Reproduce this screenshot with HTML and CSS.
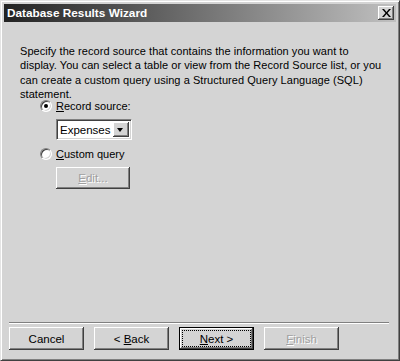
FILE: index.html
```html
<!DOCTYPE html>
<html lang="en">
<head>
  <meta charset="UTF-8" />
  <meta name="viewport" content="width=device-width, initial-scale=1.0" />
  <title>Database Results Wizard</title>
  <link rel="stylesheet" href="styles.css">
</head>
<body>
  <div class="window">
    <div class="titlebar">
      <span class="title">Database Results Wizard</span>
      <button class="close-btn" aria-label="Close">
        <svg width="9" height="8" viewBox="0 0 9 8">
          <path d="M0 0h2l2.5 3 2.5-3h2L5.5 4 9 8H7L4.5 5 2 8H0l3.5-4z" fill="#000"/>
        </svg>
      </button>
    </div>

    <div class="content">
      <p class="intro">Specify the record source that contains the information you want to display. You can select a table or view from the Record Source list, or you can create a custom query using a Structured Query Language (SQL) statement.</p>

      <div class="options">
        <label class="radio-row">
          <span class="radio checked"></span>
          <span><u>R</u>ecord source:</span>
        </label>
        <div class="select">
          <span class="select-value">Expenses</span>
          <span class="select-arrow"></span>
        </div>
        <label class="radio-row">
          <span class="radio"></span>
          <span><u>C</u>ustom query</span>
        </label>
        <button class="btn disabled edit-btn"><u>E</u>dit...</button>
      </div>
    </div>

    <div class="footer">
      <div class="separator"></div>
      <div class="buttons">
        <button class="btn">Cancel</button>
        <button class="btn">&lt; <u>B</u>ack</button>
        <button class="btn default"><span class="focus"><u>N</u>ext &gt;</span></button>
        <button class="btn disabled"><u>F</u>inish</button>
      </div>
    </div>
  </div>
</body>
</html>
```

FILE: styles.css
```css
* {
  margin: 0;
  padding: 0;
  box-sizing: border-box;
}
body {
  background-color: #d4d4d4;
  font-family: 'Liberation Sans', Arial, sans-serif;
  font-size: 11px;
  color: #000;
}
.window {
  width: 400px;
  height: 361px;
  display: flex;
  flex-direction: column;
  background: #d4d4d4;
  border-top: 1px solid #e4e4e4;
  border-left: 1px solid #e4e4e4;
  border-right: 1px solid #404040;
  border-bottom: 1px solid #404040;
  box-shadow: inset 1px 1px 0 #fff, inset -1px -1px 0 #808080;
  padding: 3px 3px 0 3px;
}
.titlebar {
  height: 18px;
  display: flex;
  align-items: center;
  justify-content: space-between;
  padding: 0 2px 0 3px;
  background: linear-gradient(to right, #222 0%, #6a6a6a 45%, #c0c0c0 100%);
}
.title {
  color: #fff;
  font-weight: bold;
  font-size: 11.8px;
}
.close-btn {
  width: 16px;
  height: 14px;
  background: #d4d4d4;
  border: none;
  box-shadow: inset -1px -1px 0 #404040, inset 1px 1px 0 #fff, inset -2px -2px 0 #808080;
  display: flex;
  align-items: center;
  justify-content: center;
}
.content {
  flex: 1;
  padding: 22px 13px 0 16px;
}
.intro {
  line-height: 14.3px;
  letter-spacing: 0.05px;
}
.options {
  margin-top: -2px;
  padding-left: 20px;
  display: flex;
  flex-direction: column;
  align-items: flex-start;
}
.radio-row {
  display: flex;
  align-items: center;
  gap: 4px;
  height: 14px;
}
.radio {
  width: 12px;
  height: 12px;
  border-radius: 50%;
  background: #fff;
  border: 1px solid;
  border-color: #808080 #fff #fff #808080;
  box-shadow: inset 1px 1px 0 #404040, inset -1px -1px 0 #d4d4d4;
  display: flex;
  align-items: center;
  justify-content: center;
}
.radio.checked::after {
  content: "";
  width: 4px;
  height: 4px;
  border-radius: 50%;
  background: #000;
}
.select {
  margin: 6px 0 7px 16px;
  width: 76px;
  height: 21px;
  display: flex;
  align-items: center;
  background: #fff;
  border: 1px solid;
  border-color: #808080 #fff #fff #808080;
  box-shadow: inset 1px 1px 0 #404040, inset -1px -1px 0 #d4d4d4;
  padding: 2px;
}
.select-value {
  flex: 1;
  padding-left: 1px;
  font-size: 11.5px;
}
.select-arrow {
  width: 16px;
  height: 15px;
  background: #d4d4d4;
  box-shadow: inset -1px -1px 0 #404040, inset 1px 1px 0 #fff, inset -2px -2px 0 #808080;
  position: relative;
}
.select-arrow::after {
  content: "";
  position: absolute;
  left: 4px;
  top: 6px;
  border-left: 3.5px solid transparent;
  border-right: 3.5px solid transparent;
  border-top: 4px solid #000;
}
.btn {
  width: 75px;
  height: 23px;
  background: #d4d4d4;
  border: none;
  font-family: 'Liberation Sans', Arial, sans-serif;
  font-size: 11.5px;
  color: #000;
  box-shadow: inset -1px -1px 0 #404040, inset 1px 1px 0 #fff, inset -2px -2px 0 #808080;
}
.btn.disabled {
  color: #a0a0a0;
  text-shadow: 1px 1px 0 #fff;
}
.edit-btn {
  width: 74px;
  height: 22px;
  margin: 6px 0 0 16px;
}
.btn.default {
  border: 1px solid #000;
  padding: 3px;
}
.focus {
  display: flex;
  align-items: center;
  justify-content: center;
  height: 100%;
  outline: 1px dotted #000;
}
.footer {
  padding: 0 5px 10px 5px;
}
.separator {
  height: 2px;
  border-top: 1px solid #808080;
  border-bottom: 1px solid #fff;
  margin-right: 2px;
}
.buttons {
  display: flex;
  gap: 10px;
  padding-top: 3px;
}
```
